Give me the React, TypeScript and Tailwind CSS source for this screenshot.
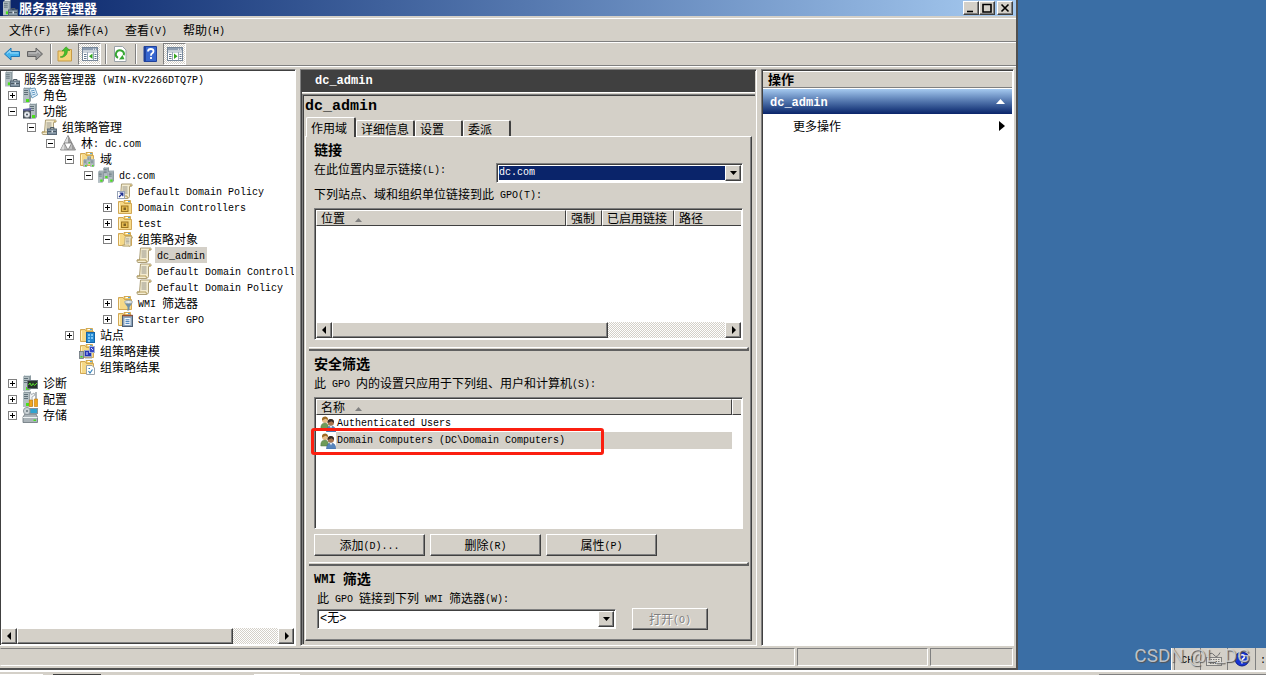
import type { ReactNode } from "react";
import clsx from "clsx";

const RAISED =
  "border border-t-white border-l-white border-r-[#404040] border-b-[#404040] bg-[#d4d0c8] shadow-[inset_-1px_-1px_0_#808080]";
const SUNKEN =
  "border border-t-[#808080] border-l-[#808080] border-r-white border-b-white p-px shadow-[inset_1px_1px_0_#404040]";
const CHECKER =
  "bg-[repeating-conic-gradient(#d4d0c8_0_25%,#ffffff_0_50%)] bg-[length:2px_2px]";

const LATIN = "font-['Liberation_Mono','Noto_Sans_CJK_SC',monospace]";

const latinSizes = {
  sm: "text-[10px] align-[1px]",
  md: "text-[12px] align-[1px]",
  lg: "text-[15px]",
};

function Txt({ children, size = "sm" }: { children: string; size?: keyof typeof latinSizes }) {
  return (
    <span className="whitespace-pre">
      {children
        .split(/([\x20-\x7e]+)/)
        .filter(Boolean)
        .map((part, i) =>
          /^[\x20-\x7e]/.test(part) ? (
            <span key={i} className={clsx("leading-none", LATIN, latinSizes[size])}>
              {part}
            </span>
          ) : (
            part
          )
        )}
    </span>
  );
}

/* ---------- icon parts, all on a 16x16 grid ---------- */

function Svg({ children, size = 16 }: { children: ReactNode; size?: number }) {
  return (
    <svg width={size} height={size} viewBox="0 0 16 16" className="shrink-0" aria-hidden="true">
      {children}
    </svg>
  );
}

function Tower({ x = 0, y = 0, s = 1 }: { x?: number; y?: number; s?: number }) {
  return (
    <g transform={`translate(${x} ${y}) scale(${s})`}>
      <path d="M0 2 L2 0 H8 V14 L6 16 H0Z" fill="#8d9ba1" />
      <path d="M0 2 H6 V16 H0Z" fill="#b3bfc3" />
      <path d="M1 3.5H5M1 5.5H5M1 7.5H5" stroke="#5f7078" strokeWidth="1" />
      <path d="M2 .5H7.5" stroke="#dfe8ea" />
      <rect x="3" y="12" width="3" height="3" fill="#4be01c" />
    </g>
  );
}

function Toolbox() {
  return (
    <g>
      <path d="M9.5 10V8.5H13V10" fill="none" stroke="#4c5a66" />
      <rect x="6.5" y="10" width="9" height="5.5" fill="#8496a5" stroke="#5a6a78" />
      <path d="M7 12.5H15" stroke="#4c5a66" />
      <rect x="10.5" y="11.5" width="1.5" height="2" fill="#e5ecf0" />
    </g>
  );
}

function FolderShape() {
  return (
    <g>
      <path d="M7 1.5H13.5V5H7Z" fill="#f3cf6b" stroke="#c89a3a" strokeWidth=".8" />
      <path d="M8.5 2.5H12" stroke="#fff" />
      <rect x="11" y="2" width="2" height="1.2" fill="#5aa4dd" />
      <path d="M1.5 2.5H6L7.5 4.5H14.5V14.5H1.5Z" fill="#f6d987" stroke="#cda049" strokeWidth=".9" />
      <path d="M2.5 4V13.5" stroke="#fff3c6" />
    </g>
  );
}

function ScrollShape({ x = 0, y = 0, s = 1 }: { x?: number; y?: number; s?: number }) {
  return (
    <g transform={`translate(${x} ${y}) scale(${s})`}>
      <path d="M4.5 1H14.5Q15.5 1 15 3L12.5 3.5V13.5Q12 15.5 10 15.5H2Q.5 15 1 13H3.5Z" fill="#f4ecd0" stroke="#a3946b" strokeWidth=".9" />
      <path d="M1 13H10Q10 15 11 15.3" fill="none" stroke="#b59d5d" />
      <path d="M13 1.2Q15 1.5 15 3H12.8Z" fill="#c8ad68" />
      <path d="M5.5 4H10.5M5.5 6H10.5M5.5 8H10.5M5.5 10H10.5" stroke="#8b8a82" strokeWidth=".9" />
    </g>
  );
}

type IconName =
  | "server" | "roles" | "features" | "gpm" | "forest" | "domains" | "domain" | "link" | "ou"
  | "gpos" | "gpo" | "wmi" | "starter" | "sites" | "modeling" | "results" | "diag" | "config"
  | "storage" | "users";

const icons: Record<IconName, ReactNode> = {
  server: (
    <>
      <Tower x={1} s={0.95} />
      <Toolbox />
    </>
  ),
  roles: (
    <>
      <Tower x={1} />
      <path d="M7 2L13 1L15.5 8L10 11Z" fill="#e8f4fc" stroke="#6f9fc0" />
      <path d="M9 4L12.5 3.3M9.5 6L13 5.2M10.2 8L13.5 7" stroke="#5c96c2" />
    </>
  ),
  features: (
    <>
      <Tower x={7} />
      <path d="M1 6L9 5V14H1Z" fill="#6362a8" />
      <rect x="1" y="7.5" width="8" height="8" fill="#46505a" />
      <circle cx="5" cy="11.5" r="3" fill="#e8edf2" stroke="#888" strokeWidth=".5" />
      <circle cx="5" cy="11.5" r="1" fill="#46505a" />
    </>
  ),
  gpm: (
    <>
      <ScrollShape />
      <Toolbox />
    </>
  ),
  forest: (
    <>
      <path d="M8 .5L15.5 15H.5Z" fill="#bdbdbd" stroke="#777" strokeWidth=".8" />
      <path d="M8 1V8H4.3Z" fill="#dedede" />
      <path d="M8 1L11.7 8H8Z" fill="#999" />
      <path d="M4.2 8H11.8L8 15Z" fill="#fff" stroke="#777" strokeWidth=".8" />
      <path d="M4 8.5V14.5H1Z" fill="#dedede" />
      <path d="M12 8.5V14.5H15Z" fill="#999" />
    </>
  ),
  domains: (
    <>
      <FolderShape />
      <Tower x={4.5} y={8} s={0.5} />
      <Tower x={8} y={5} s={0.5} />
      <Tower x={11.5} y={8} s={0.5} />
    </>
  ),
  domain: (
    <>
      <Tower x={5} y={0} s={0.75} />
      <Tower x={0} y={3.5} s={0.75} />
      <Tower x={10} y={3.5} s={0.75} />
    </>
  ),
  link: (
    <>
      <ScrollShape />
      <rect x=".5" y="8.5" width="7" height="7" fill="#fff" stroke="#98a4b8" />
      <path d="M2 14L5.5 10.5M2.7 10.2H5.8V13.3" fill="none" stroke="#1e2f90" strokeWidth="1.3" />
    </>
  ),
  ou: (
    <>
      <FolderShape />
      <rect x="4.5" y="7" width="6.5" height="5.5" fill="#e7bd51" stroke="#9c7521" />
      <rect x="6.5" y="8.5" width="2.5" height="2.5" fill="#7f6326" />
    </>
  ),
  gpos: (
    <>
      <FolderShape />
      <ScrollShape x={5} y={5} s={0.7} />
    </>
  ),
  gpo: <ScrollShape />,
  wmi: (
    <>
      <FolderShape />
      <ellipse cx="11.5" cy="7" rx="4" ry="1.5" fill="#e6edf2" stroke="#8795a0" strokeWidth=".8" />
      <path d="M7.5 8L10.5 12V16L12.5 15V12L15.5 8Q11.5 10 7.5 8Z" fill="#6f8fa8" />
    </>
  ),
  starter: (
    <>
      <FolderShape />
      <rect x="5.5" y="4.5" width="10" height="11" fill="#8aa2bb" stroke="#4e5f74" />
      <path d="M5.5 4.5H15.5" stroke="#9c4f2f" strokeWidth="1.5" />
      <rect x="7.5" y="7" width="6" height="7" fill="#f4f8fc" />
      <path d="M8.5 8.8H12.5M8.5 10.6H12.5M8.5 12.4H12.5" stroke="#417cb9" />
    </>
  ),
  sites: (
    <>
      <FolderShape />
      <rect x="7.5" y="5.5" width="8" height="10" fill="#2589d1" stroke="#1565a6" />
      <path d="M9 7H11V9H9ZM12 7H14V9H12ZM9 10H11V12H9ZM12 10H14V12H12ZM9 13H11V15H9Z" fill="#7cc6f5" />
    </>
  ),
  modeling: (
    <>
      <FolderShape />
      <rect x=".5" y="8.5" width="4" height="7" fill="#a6b0b7" stroke="#6b767d" strokeWidth=".8" />
      <rect x="1.5" y="13" width="2" height="1.5" fill="#45dc1c" />
      <rect x="5.5" y="7.5" width="7" height="6" fill="#2333b8" stroke="#9aa7c4" />
      <rect x="10.5" y="3.5" width="5" height="6" fill="#3546c5" stroke="#a6b2ce" />
      <path d="M8 9V12M12 5L14 7" stroke="#d7e2ff" />
      <path d="M6 15H13" stroke="#9aa7b4" />
    </>
  ),
  results: (
    <>
      <FolderShape />
      <path d="M7.5 6.5H13L15.5 9V15.5H7.5Z" fill="#fff" stroke="#8f9aa5" strokeWidth=".9" />
      <path d="M9.5 9.5H11M9.5 12L11 14L13.5 10.5" fill="none" stroke="#3182bd" strokeWidth="1.2" />
    </>
  ),
  diag: (
    <>
      <Tower x={1} />
      <rect x="5.5" y="5.5" width="10" height="8" fill="#26332a" stroke="#677078" />
      <path d="M6.5 10L8 8L9.5 11L11 8.5L12.5 10.5L15 8" fill="none" stroke="#58e02c" />
    </>
  ),
  config: (
    <>
      <Tower x={1} />
      <path d="M8 1L9.5 3.5L12 2L13 4L10 6L10.5 15H7.5V5Z" fill="#eef1f3" stroke="#8b949a" strokeWidth=".7" />
      <path d="M14 1V8" stroke="#7d868c" strokeWidth="1.2" />
      <path d="M12.3 8H15.7V15.5H12.3ZM7.3 9H10.5V15.5H7.3Z" fill="#f2a51c" stroke="#bd7708" strokeWidth=".6" />
    </>
  ),
  storage: (
    <>
      <path d="M1 10L3 7H14L15.5 10V15.5H1Z" fill="#aab3b8" stroke="#68737a" strokeWidth=".8" />
      <path d="M1 10.5H15.5" stroke="#eef2f4" />
      <circle cx="5" cy="4" r="3.6" fill="#c9d1d5" stroke="#7d888e" strokeWidth=".8" />
      <circle cx="5" cy="4" r="1" fill="#66757d" />
      <rect x="8" y="1.5" width="7.5" height="5" fill="#31a3cf" stroke="#86939b" />
      <rect x="11.5" y="12.5" width="2.5" height="1.5" fill="#41dc1c" />
    </>
  ),
  users: (
    <>
      <circle cx="5" cy="4" r="3" fill="#e7bd88" />
      <path d="M2 4.5Q1.5 .5 5.5 .5Q8.2 1 8 4L5.5 2.8Z" fill="#9b6a24" />
      <path d="M.8 13Q.5 7 5 7Q8.5 7 8.5 13Z" fill="#6f9b58" stroke="#4d7440" strokeWidth=".5" />
      <circle cx="10.8" cy="6.5" r="3.2" fill="#a9754e" />
      <path d="M7.6 7Q7.2 3 10.8 3Q14.3 3 14 7L11.5 5.2Z" fill="#352b26" />
      <path d="M6.5 16Q6.5 10 11 10Q15.8 10 15.8 16Z" fill="#5685bd" stroke="#365f94" strokeWidth=".5" />
      <path d="M10 10L11 12.5L12 10Z" fill="#fff" />
    </>
  ),
};

function Icon({ name }: { name: IconName }) {
  return <Svg>{icons[name]}</Svg>;
}

/* ---------- tree ---------- */

type Node = {
  label: string;
  icon: IconName;
  state?: "open" | "closed";
  selected?: boolean;
  children?: Node[];
};

const tree: Node[] = [
  { label: "角色", icon: "roles", state: "closed" },
  {
    label: "功能",
    icon: "features",
    state: "open",
    children: [
      {
        label: "组策略管理",
        icon: "gpm",
        state: "open",
        children: [
          {
            label: "林: dc.com",
            icon: "forest",
            state: "open",
            children: [
              {
                label: "域",
                icon: "domains",
                state: "open",
                children: [
                  {
                    label: "dc.com",
                    icon: "domain",
                    state: "open",
                    children: [
                      { label: "Default Domain Policy", icon: "link" },
                      { label: "Domain Controllers", icon: "ou", state: "closed" },
                      { label: "test", icon: "ou", state: "closed" },
                      {
                        label: "组策略对象",
                        icon: "gpos",
                        state: "open",
                        children: [
                          { label: "dc_admin", icon: "gpo", selected: true },
                          { label: "Default Domain Controll", icon: "gpo" },
                          { label: "Default Domain Policy", icon: "gpo" },
                        ],
                      },
                      { label: "WMI 筛选器", icon: "wmi", state: "closed" },
                      { label: "Starter GPO", icon: "starter", state: "closed" },
                    ],
                  },
                ],
              },
              { label: "站点", icon: "sites", state: "closed" },
              { label: "组策略建模", icon: "modeling" },
              { label: "组策略结果", icon: "results" },
            ],
          },
        ],
      },
    ],
  },
  { label: "诊断", icon: "diag", state: "closed" },
  { label: "配置", icon: "config", state: "closed" },
  { label: "存储", icon: "storage", state: "closed" },
];

function TreeItem({ node }: { node: Node }) {
  return (
    <li>
      <div className="flex h-4 items-center">
        {node.state ? (
          <button
            type="button"
            aria-label={node.label}
            aria-expanded={node.state === "open"}
            className="mr-[5px] size-[9px] shrink-0 border border-[#808080] bg-white"
          >
            <svg width="7" height="7" viewBox="0 0 7 7" className="block">
              <path d={node.state === "open" ? "M1 3.5H6" : "M1 3.5H6M3.5 1V6"} stroke="#000" />
            </svg>
          </button>
        ) : (
          <span className="w-[14px] shrink-0" />
        )}
        <Icon name={node.icon} />
        <span className={clsx("ml-[3px] h-4 px-0.5 leading-[15px]", node.selected && "bg-[#d4d0c8]")}>
          <Txt>{node.label}</Txt>
        </span>
      </div>
      {node.children && (
        <ul className="pl-[19px]">
          {node.children.map((c) => (
            <TreeItem key={c.label} node={c} />
          ))}
        </ul>
      )}
    </li>
  );
}

/* ---------- small controls ---------- */

function Arrow({ dir }: { dir: "left" | "right" | "down" }) {
  const d = { left: "M5 0V8L1 4Z", right: "M2 0V8L6 4Z", down: "M0 2H7L3.5 6Z" }[dir];
  return (
    <svg width="7" height="8" viewBox="0 0 7 8" aria-hidden="true">
      <path d={d} />
    </svg>
  );
}

function ScrollBar({ thumb }: { thumb: string }) {
  return (
    <div className={clsx("flex h-4 shrink-0", CHECKER)}>
      <button type="button" aria-label="向左" className={clsx("flex w-4 items-center justify-center", RAISED)}>
        <Arrow dir="left" />
      </button>
      <div className={clsx(RAISED, thumb)} />
      <button type="button" aria-label="向右" className={clsx("ml-auto flex w-4 items-center justify-center", RAISED)}>
        <Arrow dir="right" />
      </button>
    </div>
  );
}

function Combo({ id, value, active, className }: { id: string; value: string; active?: boolean; className: string }) {
  return (
    <div className={clsx("relative h-5 bg-white", SUNKEN, className)}>
      <select
        id={id}
        className={clsx(
          "block h-4 w-full appearance-none border border-white leading-[14px] outline-none",
          LATIN,
          active ? "bg-[#0a246a] text-[10px] text-white" : "bg-white text-[12px] text-black"
        )}
      >
        <option>{value}</option>
      </select>
      <span className={clsx("pointer-events-none absolute inset-y-px right-px flex w-4 items-center justify-center", RAISED)}>
        <Arrow dir="down" />
      </span>
    </div>
  );
}

function PushButton({ children, className, disabled }: { children: string; className: string; disabled?: boolean }) {
  return (
    <button
      type="button"
      disabled={disabled}
      className={clsx("h-[22px] leading-5", RAISED, className, disabled && "text-[#808080] [text-shadow:1px_1px_0_#fff]")}
    >
      <Txt>{children}</Txt>
    </button>
  );
}

function Divider() {
  return (
    <div className="-mr-1.5 -ml-[5px] h-1 shrink-0 border-t border-r-2 border-b-2 border-t-white border-r-[#606060] border-b-[#606060]" />
  );
}

function Th({ children, className }: { children?: string; className?: string }) {
  return (
    <th
      className={clsx(
        "h-4 overflow-hidden border border-t-white border-r-[#404040] border-b-[#404040] border-l-white bg-[#d4d0c8] px-1 text-left leading-[14px] font-normal whitespace-nowrap",
        className
      )}
    >
      {children}
      {(children === "位置" || children === "名称") && (
        <svg width="7" height="4" viewBox="0 0 7 4" className="ml-[10px] inline-block align-middle" aria-hidden="true">
          <path d="M0 4L3.5 0L7 4Z" fill="#808080" />
        </svg>
      )}
    </th>
  );
}

function Caption({ path, label }: { path: string; label: string }) {
  return (
    <button type="button" aria-label={label} className={clsx("flex h-[14px] w-4 items-center justify-center", RAISED)}>
      <svg width="10" height="10" viewBox="0 0 10 10">
        <path d={path} fill="none" stroke="#000" strokeWidth="1.6" />
      </svg>
    </button>
  );
}

function Separator() {
  return <div className="mx-1 h-5 w-0.5 border-l border-r border-l-[#808080] border-r-white" />;
}

function PaneIcon({ flip }: { flip?: boolean }) {
  return (
    <Svg>
      <rect x=".5" y="1.5" width="15" height="13" fill="#fff" stroke="#76879a" />
      <rect x="1" y="2" width="14" height="2.5" fill="#8d9db0" />
      <path d="M11 3.2H14" stroke="#fff" strokeDasharray="1 1" />
      <path d="M1 6H15M5.5 6V14.5M11.5 6V14.5" stroke="#9aa8b8" />
      <path d="M2 8.5H4.5M2 10.5H4.5M2 12.5H4.5M12.5 8.5H14.5M12.5 10.5H14.5M12.5 12.5H14.5" stroke="#60758c" />
      <path d={flip ? "M7 7.5V13L10.5 10.3Z" : "M10.5 7.5V13L7 10.3Z"} fill="#31a51e" />
    </Svg>
  );
}

function ToolButton({ label, pressed, children }: { label: string; pressed?: boolean; children: ReactNode }) {
  return (
    <button
      type="button"
      aria-label={label}
      className={clsx(
        "flex h-[22px] items-center justify-center",
        pressed
          ? "w-[23px] border border-t-[#808080] border-r-white border-b-white border-l-[#808080] " + CHECKER
          : "w-[18px]"
      )}
    >
      {children}
    </button>
  );
}

const ARROW_PATH = "M.5 8L7 2V5.5H15.5V10.5H7V14Z";

function Toolbar() {
  return (
    <div className="flex h-6 items-center border-t border-b border-t-white border-b-[#808080] pl-[3px]">
      <ToolButton label="后退">
        <Svg>
          <path d={ARROW_PATH} fill="#42b3ec" stroke="#1f76b5" />
          <path d="M3 7.5L6 4.8V7H14.5" fill="none" stroke="#a9e0fb" />
        </Svg>
      </ToolButton>
      <div className="w-[5px]" />
      <ToolButton label="前进">
        <Svg>
          <g transform="matrix(-1 0 0 1 16 0)">
            <path d={ARROW_PATH} fill="#989898" stroke="#626262" />
            <path d="M3 7.5L6 4.8V7H14.5" fill="none" stroke="#c9c9c9" />
          </g>
        </Svg>
      </ToolButton>
      <div className="w-0.5" />
      <Separator />
      <ToolButton label="上移">
        <Svg>
          <path d="M1 5H6L7.5 3.5H14.5V15H1Z" fill="#f4d37b" stroke="#c79a45" />
          <path d="M3 11Q8 10 7.5 5H5L9 .8L13 4.5H10.5Q10.5 10 5 11.5Z" fill="#45bf2b" stroke="#2f8f1c" strokeWidth=".5" />
        </Svg>
      </ToolButton>
      <div className="w-1" />
      <ToolButton label="控制台树" pressed>
        <PaneIcon />
      </ToolButton>
      <Separator />
      <ToolButton label="刷新">
        <Svg>
          <path d="M2.5 .5H10.5L14 4V15.5H2.5Z" fill="#fff" stroke="#9aa2a8" />
          <path d="M6 11.8A4 4 0 1 1 11.8 9.2" fill="none" stroke="#37a634" strokeWidth="2" />
          <path d="M7 13.5L12.5 13.2L10.5 9Z" fill="#37a634" />
        </Svg>
      </ToolButton>
      <div className="w-0.5" />
      <Separator />
      <ToolButton label="帮助">
        <Svg>
          <path d="M2 .5H14.5V15.5H2Z" fill="#3766cf" stroke="#20429c" />
          <path d="M3 1V15" stroke="#1d3a8c" strokeWidth="1.5" />
          <path d="M6 5.5Q6 3 8.8 3Q11.5 3 11.5 5.3Q11.5 6.8 9.8 7.6Q9 8 9 9.8M9 11V13" fill="none" stroke="#fff" strokeWidth="1.8" />
        </Svg>
      </ToolButton>
      <div className="w-1" />
      <ToolButton label="操作窗格" pressed>
        <PaneIcon flip />
      </ToolButton>
    </div>
  );
}

/* ---------- panes ---------- */

function TreePane() {
  return (
    <nav className={clsx("-ml-px flex w-[297px] shrink-0 flex-col bg-white", SUNKEN)}>
      <div className="flex-1 overflow-hidden whitespace-nowrap">
        <div className="flex h-4 items-center pl-[3px]">
          <Icon name="server" />
          <span className="h-4 pl-1 leading-[15px]">
            <Txt>服务器管理器 (WIN-KV2266DTQ7P)</Txt>
          </span>
        </div>
        <ul className="pl-[7px]">
          {tree.map((n) => (
            <TreeItem key={n.label} node={n} />
          ))}
        </ul>
      </div>
      <ScrollBar thumb="w-[216px]" />
    </nav>
  );
}

const tabs = [
  { label: "作用域", width: "w-[50px]" },
  { label: "详细信息", width: "w-[59px]" },
  { label: "设置", width: "w-12" },
  { label: "委派", width: "w-12" },
];

function ScopePage() {
  return (
    <div className="mr-[3px] mb-[3px] ml-px flex flex-1 flex-col border border-t-white border-r-[#404040] border-b-[#404040] border-l-white pr-2 pl-2 shadow-[inset_-1px_-1px_0_#808080]">
      <h2 className="text-[14px] leading-6 font-bold">链接</h2>
      <div className="mt-0.5 flex">
        <label htmlFor="location" className="w-[182px] shrink-0 leading-3">
          <Txt>在此位置内显示链接(L):</Txt>
        </label>
        <Combo id="location" value="dc.com" active className="flex-1" />
      </div>
      <p className="mt-[3px] h-4 leading-4">
        <Txt>下列站点、域和组织单位链接到此 GPO(T):</Txt>
      </p>
      <div className={clsx("mt-1.5 flex h-[132px] shrink-0 flex-col bg-white", SUNKEN)}>
        <table className="w-full table-fixed border-separate border-spacing-0">
          <thead>
            <tr>
              <Th className="w-[250px]">位置</Th>
              <Th className="w-9">强制</Th>
              <Th className="w-[72px]">已启用链接</Th>
              <Th className="border-r-0">路径</Th>
            </tr>
          </thead>
        </table>
        <div className="flex-1" />
        <ScrollBar thumb="w-[276px]" />
      </div>
      <div className="h-[7px]" />
      <Divider />

      <h2 className="mt-1 h-4 text-[14px] leading-4 font-bold">安全筛选</h2>
      <p className="mt-1 h-4 leading-4">
        <Txt>此 GPO 内的设置只应用于下列组、用户和计算机(S):</Txt>
      </p>
      <div className={clsx("relative mt-1.5 h-[132px] shrink-0 bg-white", SUNKEN)}>
        <table className="w-full table-fixed border-separate border-spacing-0">
          <thead>
            <tr>
              <Th>名称</Th>
              <Th className="w-[9px] border-r-0 px-0" />
            </tr>
          </thead>
          <tbody>
            {["Authenticated Users", "Domain Computers (DC\\Domain Computers)"].map((name, i) => (
              <tr key={name}>
                <td className="h-[17px] p-0">
                  <div className="flex h-[17px] items-center pl-1">
                    <Icon name="users" />
                    <span className={clsx("h-[17px] flex-1 pl-px leading-[14px]", i === 1 && "bg-[#d4d0c8]")}>
                      <Txt>{name}</Txt>
                    </span>
                  </div>
                </td>
                <td className="p-0" />
              </tr>
            ))}
          </tbody>
        </table>
        <div className="pointer-events-none absolute top-[30px] -left-1 h-[27px] w-[293px] rounded-[3px] border-3 border-[#fb1f10]" />
      </div>
      <div className="mt-[5px] flex gap-[5px]">
        <PushButton className="w-[111px]">添加(D)...</PushButton>
        <PushButton className="w-[111px]">删除(R)</PushButton>
        <PushButton className="w-[111px]">属性(P)</PushButton>
      </div>
      <div className="h-1.5" />
      <Divider />

      <h2 className="mt-1 h-4 text-[14px] leading-4 font-bold">
        <Txt size="md">WMI 筛选</Txt>
      </h2>
      <label htmlFor="wmi" className="mt-1 h-4 pl-[3px] leading-4">
        <Txt>此 GPO 链接到下列 WMI 筛选器(W):</Txt>
      </label>
      <div className="mt-0.5 flex items-center gap-4 pl-[3px]">
        <Combo id="wmi" value="<无>" className="w-[299px]" />
        <PushButton className="w-[76px]" disabled>
          打开(O)
        </PushButton>
      </div>
    </div>
  );
}

function DetailPane() {
  return (
    <main className={clsx("flex min-w-0 flex-1 flex-col", SUNKEN)}>
      <div className="h-[21px] bg-[#404040] pl-[13px] font-bold text-white">
        <Txt size="md">dc_admin</Txt>
      </div>
      <div className="mb-px h-px bg-white" />
      <div className="flex flex-1 flex-col border-t border-l border-[#808080] pt-px pl-px shadow-[inset_1px_1px_0_#404040]">
        <h1 className="h-[21px] pl-px leading-[18px] font-bold">
          <Txt size="lg">dc_admin</Txt>
        </h1>
        <div role="tablist" className="flex h-[19px] items-end pl-0.5">
          {tabs.map((t, i) => (
            <button
              key={t.label}
              type="button"
              role="tab"
              aria-selected={i === 0}
              className={clsx(
                "rounded-t-xs border-t border-r-2 border-l border-t-white border-r-[#404040] border-l-white bg-[#d4d0c8] pl-1 text-left",
                t.width,
                i === 0 ? "relative -mb-px h-5 leading-4" : "h-4 leading-[14px]"
              )}
            >
              {t.label}
            </button>
          ))}
        </div>
        <ScopePage />
      </div>
    </main>
  );
}

function ActionsPane() {
  return (
    <aside className={clsx("flex w-[253px] shrink-0 flex-col bg-white", SUNKEN)}>
      <h2 className="mt-px h-4 border-b border-[#808080] bg-[#d4d0c8] pl-[5px] text-[13px] leading-[14px] font-bold">
        操作
      </h2>
      <button
        type="button"
        className="mt-px flex h-[25px] items-center justify-between bg-linear-to-b from-[#a6caf0] to-[#0a246a] px-[7px] font-bold text-white"
      >
        <Txt size="md">dc_admin</Txt>
        <svg width="9" height="5" viewBox="0 0 9 5" aria-hidden="true">
          <path d="M0 5L4.5 0L9 5Z" fill="#fff" />
        </svg>
      </button>
      <button type="button" className="flex h-6 items-center justify-between pr-[7px] pl-[30px]">
        更多操作
        <svg width="6" height="10" viewBox="0 0 6 10" aria-hidden="true">
          <path d="M0 0V10L6 5Z" />
        </svg>
      </button>
    </aside>
  );
}

function ServerManager() {
  return (
    <div className="flex min-w-0 flex-1 flex-col overflow-hidden border-r-2 border-b-2 border-r-[#505050] border-b-[#505050] bg-[#d4d0c8]">
      <header className="flex h-4 items-center bg-linear-to-r from-[#0a246a] to-[#a6caf0] pl-0.5 text-[13px] font-bold text-white">
        <Icon name="server" />
        <span className="flex-1 pl-px leading-4">服务器管理器</span>
        <div className="mr-[3px] flex">
          <Caption label="最小化" path="M1 8.5H7" />
          <Caption label="最大化" path="M1 1.5H9V9H1Z" />
          <div className="w-0.5" />
          <Caption label="关闭" path="M1.5 1.5L8.5 8.5M8.5 1.5L1.5 8.5" />
        </div>
      </header>
      <div className="mt-0.5 flex h-6 items-center gap-4 border-t border-b border-t-white border-b-[#808080] pl-[9px]">
        {["文件(F)", "操作(A)", "查看(V)", "帮助(H)"].map((m) => (
          <button key={m} type="button">
            <Txt>{m}</Txt>
          </button>
        ))}
      </div>
      <Toolbar />
      <div className="mb-0.5 h-px bg-white" />
      <div className="flex flex-1 gap-1">
        <TreePane />
        <DetailPane />
        <ActionsPane />
        <div className="-ml-1 w-0.5" />
      </div>
      <footer className="flex gap-0.5 py-0.5 pr-[3px]">
        <div className="h-[18px] flex-1 border border-t-[#808080] border-r-white border-b-white border-l-transparent" />
        <div className="h-[18px] w-[131px] border border-t-[#808080] border-r-white border-b-white border-l-[#808080]" />
        <div className="h-[18px] w-[83px] border border-t-[#808080] border-r-white border-b-white border-l-[#808080]" />
      </footer>
    </div>
  );
}

function Tray() {
  return (
    <div className="relative flex h-[22px] w-[95px] items-center bg-[#d4d0c8]">
      <div className="h-full w-1 border-r border-l border-r-[#808080] border-l-white" />
      <div className="flex h-full w-[26px] items-center justify-center border-r border-[#808080]">
        <Txt>CH</Txt>
      </div>
      <div className="flex h-full w-7 items-center justify-center border-r border-[#808080]">
        <Svg>
          <path d="M2 5Q5 0 8 4T14 1.5" fill="none" stroke="#707070" />
          <rect x=".5" y="6.5" width="15" height="8" fill="#e3e0d8" stroke="#808080" />
          <path d="M2 8.5H14M2 10.5H14M4 12.5H12" stroke="#777" strokeDasharray="1.5 1" />
        </Svg>
      </div>
      <div className="flex h-full w-7 items-center justify-center border-r border-[#808080]">
        <Svg>
          <circle cx="8" cy="8" r="7" fill="#1733d6" stroke="#0b1b87" />
          <path d="M5.5 6Q5.5 3.7 8 3.7Q10.5 3.7 10.5 5.8Q10.5 7 9 7.7Q8 8.2 8 9.5M8 10.8V12.6" fill="none" stroke="#fff" strokeWidth="1.6" />
        </Svg>
      </div>
      <span className="pl-1">
        <Txt>:</Txt>
      </span>
      <span className="pointer-events-none absolute top-0 right-4 font-[Roboto,'Liberation_Sans',sans-serif] text-[19px] leading-4 whitespace-nowrap text-[#dcdcdc]/80 [text-shadow:1px_1px_1px_#555]">
        CSDN @L_DG
      </span>
    </div>
  );
}

export default function App() {
  return (
    <div className="flex min-h-screen flex-col overflow-hidden bg-[#3a6ea5] font-['Noto_Sans_CJK_SC',sans-serif] text-[12px] text-black">
      <div className="flex flex-1">
        <ServerManager />
        <div className="flex w-62 shrink-0 items-end justify-end overflow-hidden">
          <Tray />
        </div>
      </div>
      <div className="flex h-[5px] items-end border-t-2 border-white bg-[#d4d0c8]">
        <div className="h-px w-[43px] bg-white" />
        <div className="ml-2.5 h-px w-12 bg-[#404040]" />
        <div className="ml-[153px] h-px w-[46px] bg-white" />
        <div className="ml-auto h-px w-[167px] bg-[#808080]" />
      </div>
    </div>
  );
}
